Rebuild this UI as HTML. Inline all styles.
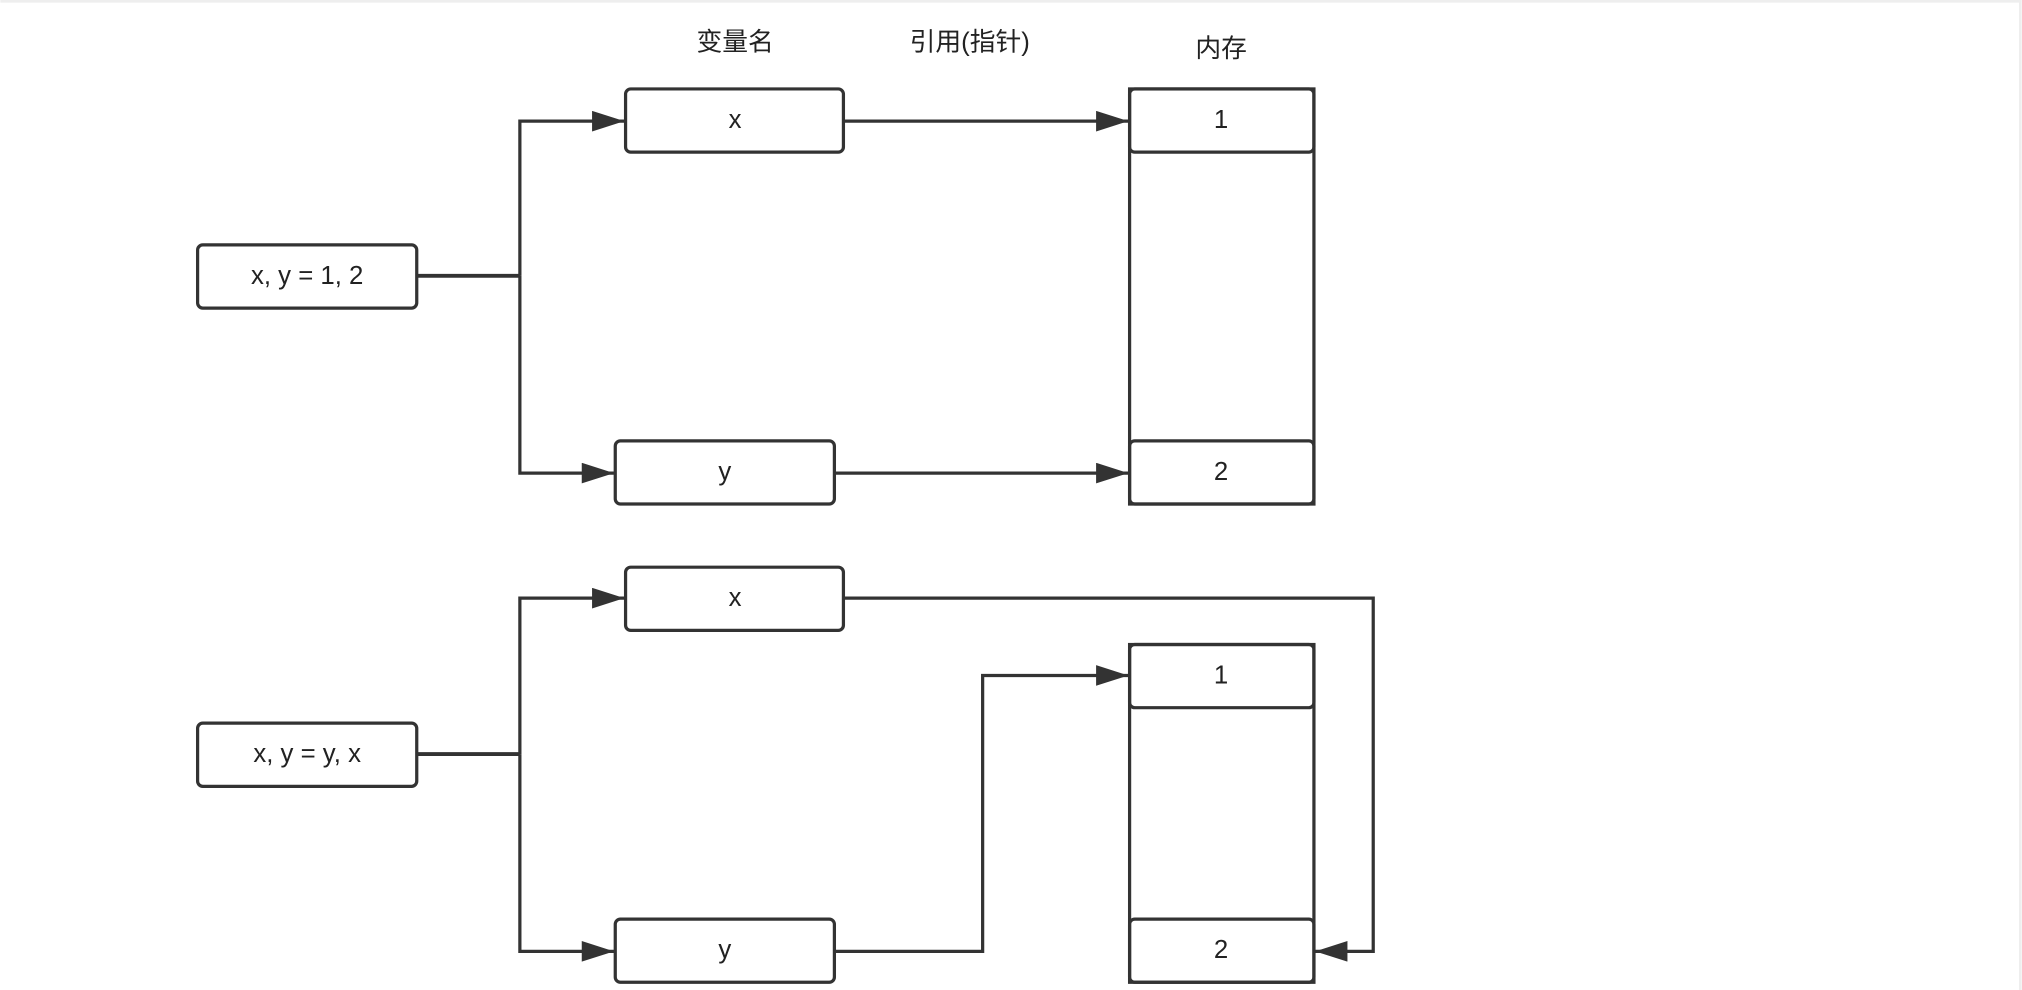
<!DOCTYPE html>
<html><head><meta charset="utf-8"><style>
html,body{margin:0;padding:0;background:#fff;}
svg{display:block}
text{font-family:"Liberation Sans","Noto Sans CJK SC",sans-serif;fill:#222;text-anchor:middle;dominant-baseline:central}
</style></head><body>
<svg width="2022" height="990" viewBox="0 0 1568 768" xmlns="http://www.w3.org/2000/svg">
<rect x="0" y="0" width="1568" height="768" fill="#fff"/>
<line x1="0" y1="1" x2="1568" y2="1" stroke="#eee" stroke-width="2"/>
<line x1="1567" y1="0" x2="1567" y2="768" stroke="#eee" stroke-width="2"/>
<defs>
<marker id="a" markerWidth="26" markerHeight="18" refX="25" refY="8" orient="auto" markerUnits="userSpaceOnUse">
<path d="M0,0 L25,8 L0,16 Z" fill="#333"/></marker>
</defs>
<g fill="none" stroke="#333" stroke-width="2.5">
<rect x="485" y="69" width="169" height="49" rx="4"/>
<rect x="477" y="342" width="170" height="49" rx="4"/>
<rect x="153" y="190" width="170" height="49" rx="4"/>
<rect x="876" y="69" width="143" height="322"/>
<rect x="876" y="69" width="143" height="49" rx="4"/>
<rect x="876" y="342" width="143" height="49" rx="4"/>
<rect x="485" y="440" width="169" height="49" rx="4"/>
<rect x="477" y="713" width="170" height="49" rx="4"/>
<rect x="153" y="561" width="170" height="49" rx="4"/>
<rect x="876" y="500" width="143" height="262"/>
<rect x="876" y="500" width="143" height="49" rx="4"/>
<rect x="876" y="713" width="143" height="49" rx="4"/>
<path d="M323,214 H403" stroke-width="3"/>
<path d="M403,214 V94 H484" marker-end="url(#a)"/>
<path d="M403,214 V367 H476" marker-end="url(#a)"/>
<path d="M654,94 H875" marker-end="url(#a)"/>
<path d="M647,367 H875" marker-end="url(#a)"/>
<path d="M323,585 H403" stroke-width="3"/>
<path d="M403,585 V464 H484" marker-end="url(#a)"/>
<path d="M403,585 V738 H476" marker-end="url(#a)"/>
<path d="M654,464 H1065 V738 H1020" marker-end="url(#a)"/>
<path d="M647,738 H762 V524 H875" marker-end="url(#a)"/>
</g>
<g font-size="20">
<text x="570" y="33">变量名</text>
<text x="752" y="33">引用(指针)</text>
<text x="947" y="38">内存</text>
<text x="570" y="93">x</text>
<text x="562" y="366">y</text>
<text x="238" y="214">x, y = 1, 2</text>
<text x="947" y="93">1</text>
<text x="947" y="366">2</text>
<text x="570" y="464">x</text>
<text x="562" y="737">y</text>
<text x="238" y="585">x, y = y, x</text>
<text x="947" y="524">1</text>
<text x="947" y="737">2</text>
</g>
</svg>
</body></html>
